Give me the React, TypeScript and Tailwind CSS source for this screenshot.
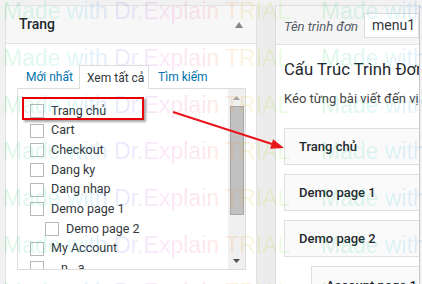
import React from "react";

const pages = [
  { label: "Trang chủ", indent: false },
  { label: "Cart", indent: false },
  { label: "Checkout", indent: false },
  { label: "Dang ky", indent: false },
  { label: "Dang nhap", indent: false },
  { label: "Demo page 1", indent: false },
  { label: "Demo page 2", indent: true },
  { label: "My Account", indent: false },
  { label: "...n...a", indent: false },
];

const menuItems = ["Trang chủ", "Demo page 1", "Demo page 2"];

function Watermark() {
  const rows = [0, 1, 2, 3, 4, 5, 6];
  return (
    <div className="pointer-events-none absolute inset-0 flex flex-col overflow-hidden font-['Liberation_Sans',Arial,sans-serif]">
      {rows.map((r) => (
        <div key={r} className="flex h-[46.8px] shrink-0 pl-[3px] text-[23px] leading-[23px] whitespace-nowrap">
          {[0, 1].map((k) => (
            <span
              key={k}
              className="w-[318px] shrink-0 bg-[linear-gradient(90deg,rgba(20,200,80,0.14)_0%,rgba(20,200,200,0.13)_22%,rgba(40,120,230,0.13)_36%,rgba(120,70,230,0.13)_44%,rgba(230,70,200,0.13)_55%,rgba(240,70,70,0.13)_72%,rgba(240,150,40,0.15)_80%,rgba(200,220,30,0.15)_90%,rgba(60,220,80,0.13)_100%)] bg-[length:290px_100%] bg-no-repeat bg-clip-text text-transparent"
            >
              Made with Dr.Explain TRIAL
            </span>
          ))}
        </div>
      ))}
    </div>
  );
}

function Checkbox() {
  return <span className="h-[14px] w-[14px] shrink-0 border border-[#b4b9be] bg-white" />;
}

export default function App() {
  return (
    <div className="relative h-[284px] w-[422px] overflow-hidden bg-[#f1f1f1] font-['Roboto',sans-serif] text-[13px] text-[#32373c]">
      <div className="flex h-full pl-[5px] pt-[5px]">
        {/* left: page list */}
        <div className="flex w-[252px] shrink-0 flex-col border-l border-r border-t border-[#e2e2e2] bg-white">
          <div className="flex h-[38px] shrink-0 items-center justify-between border-b border-[#e2e2e2] bg-[#f7f7f7] pl-[13px] pr-[13px]">
            <span className="text-[14px] font-medium text-[#23282d]">Trang</span>
            <svg width="8" height="6" viewBox="0 0 8 6"><path d="M0 6 L4 0 L8 6 Z" fill="#82878c" /></svg>
          </div>
          <div className="flex flex-1 flex-col pl-[11px] pr-[10px] pt-[21px]">
            <div className="relative z-10 flex h-[23px] items-center whitespace-nowrap text-[12px]">
              <span className="w-[62px] pl-[9px] text-[#0073aa]">Mới nhất</span>
              <span className="mb-[-1px] flex h-[24px] w-[70px] items-center border border-b-0 border-[#dddddd] bg-white pl-[7px] text-[#32373c]">Xem tất cả</span>
              <span className="pl-[9px] text-[#0073aa]">Tìm kiếm</span>
            </div>
            <div className="flex h-[182px] border border-[#dddddd] bg-white">
              <div className="flex flex-1 flex-col overflow-hidden pl-[12px] pt-[12px] text-[12.5px]">
                {pages.map((p) => (
                  <div key={p.label} className={`flex h-[19.7px] shrink-0 items-center gap-[7px] whitespace-nowrap ${p.indent ? "pl-[15px]" : ""}`}>
                    <Checkbox />
                    <span className="leading-none">{p.label}</span>
                  </div>
                ))}
              </div>
              <div className="flex w-[17px] shrink-0 flex-col bg-[#f0f0f0]">
                <div className="flex h-[17px] items-center justify-center">
                  <svg width="7" height="4" viewBox="0 0 7 4"><path d="M0 4 L3.5 0 L7 4 Z" fill="#a3a3a3" /></svg>
                </div>
                <div className="ml-[2px] h-[109px] w-[14px] border border-[#a8a8a8] bg-[#c1c1c1]" />
                <div className="flex-1" />
                <div className="flex h-[17px] items-center justify-center">
                  <svg width="7" height="4" viewBox="0 0 7 4"><path d="M0 0 L7 0 L3.5 4 Z" fill="#505050" /></svg>
                </div>
              </div>
            </div>
          </div>
        </div>

        <div className="w-[18px] shrink-0 bg-[#ececec]" />

        {/* right: menu structure */}
        <div className="flex w-[145px] shrink-0 flex-col overflow-hidden border-l border-r border-t border-[#dddddd] border-r-[#c8c8c8] bg-white">
          <div className="flex h-[39px] shrink-0 items-center border-b border-[#e2e2e2] bg-[#f5f5f5] pl-[8px]">
            <span className="mt-[4px] w-[80px] shrink-0 whitespace-nowrap italic text-[#555d66]">Tên trình đơn</span>
            <div className="flex h-[25px] flex-1 items-center border border-[#dddddd] bg-white pl-[7px] text-[14px] text-[#32373c]">menu1</div>
          </div>
          <div className="flex flex-col pl-[8px] pt-[14px]">
            <div className="whitespace-nowrap text-[16.7px] leading-[22px] text-[#23282d]">Cấu Trúc Trình Đơn</div>
            <div className="mt-[9px] whitespace-nowrap leading-[18px] text-[#444444]">Kéo từng bài viết đến vị trí mong muốn</div>
            <div className="mt-[20px] flex flex-col gap-[9px]">
              {menuItems.map((m) => (
                <div key={m} className="flex h-[37px] w-[200px] shrink-0 items-center border border-[#dfdfdf] bg-[#fafafa] pl-[14px] font-medium whitespace-nowrap text-[#23282d]">
                  {m}
                </div>
              ))}
              <div className="ml-[27px] flex h-[37px] w-[200px] shrink-0 items-start border border-[#dfdfdf] bg-[#fafafa] pl-[14px] pt-[9px] font-medium whitespace-nowrap text-[#23282d]">
                Account page 1
              </div>
            </div>
          </div>
        </div>
      </div>

      <Watermark />

      {/* annotation */}
      <div className="pointer-events-none absolute left-[22px] top-[97px] h-[23px] w-[122px] border-2 border-[#e60000] shadow-[2px_2px_2px_rgba(0,0,0,0.35)]" />
      <svg className="pointer-events-none absolute left-0 top-0" width="422" height="284" viewBox="0 0 422 284">
        <line x1="173" y1="112" x2="272" y2="144" stroke="#e8141b" strokeWidth="2" />
        <polygon points="284,148 270.1,148.8 273.1,139.2" fill="#e8141b" />
      </svg>
    </div>
  );
}
